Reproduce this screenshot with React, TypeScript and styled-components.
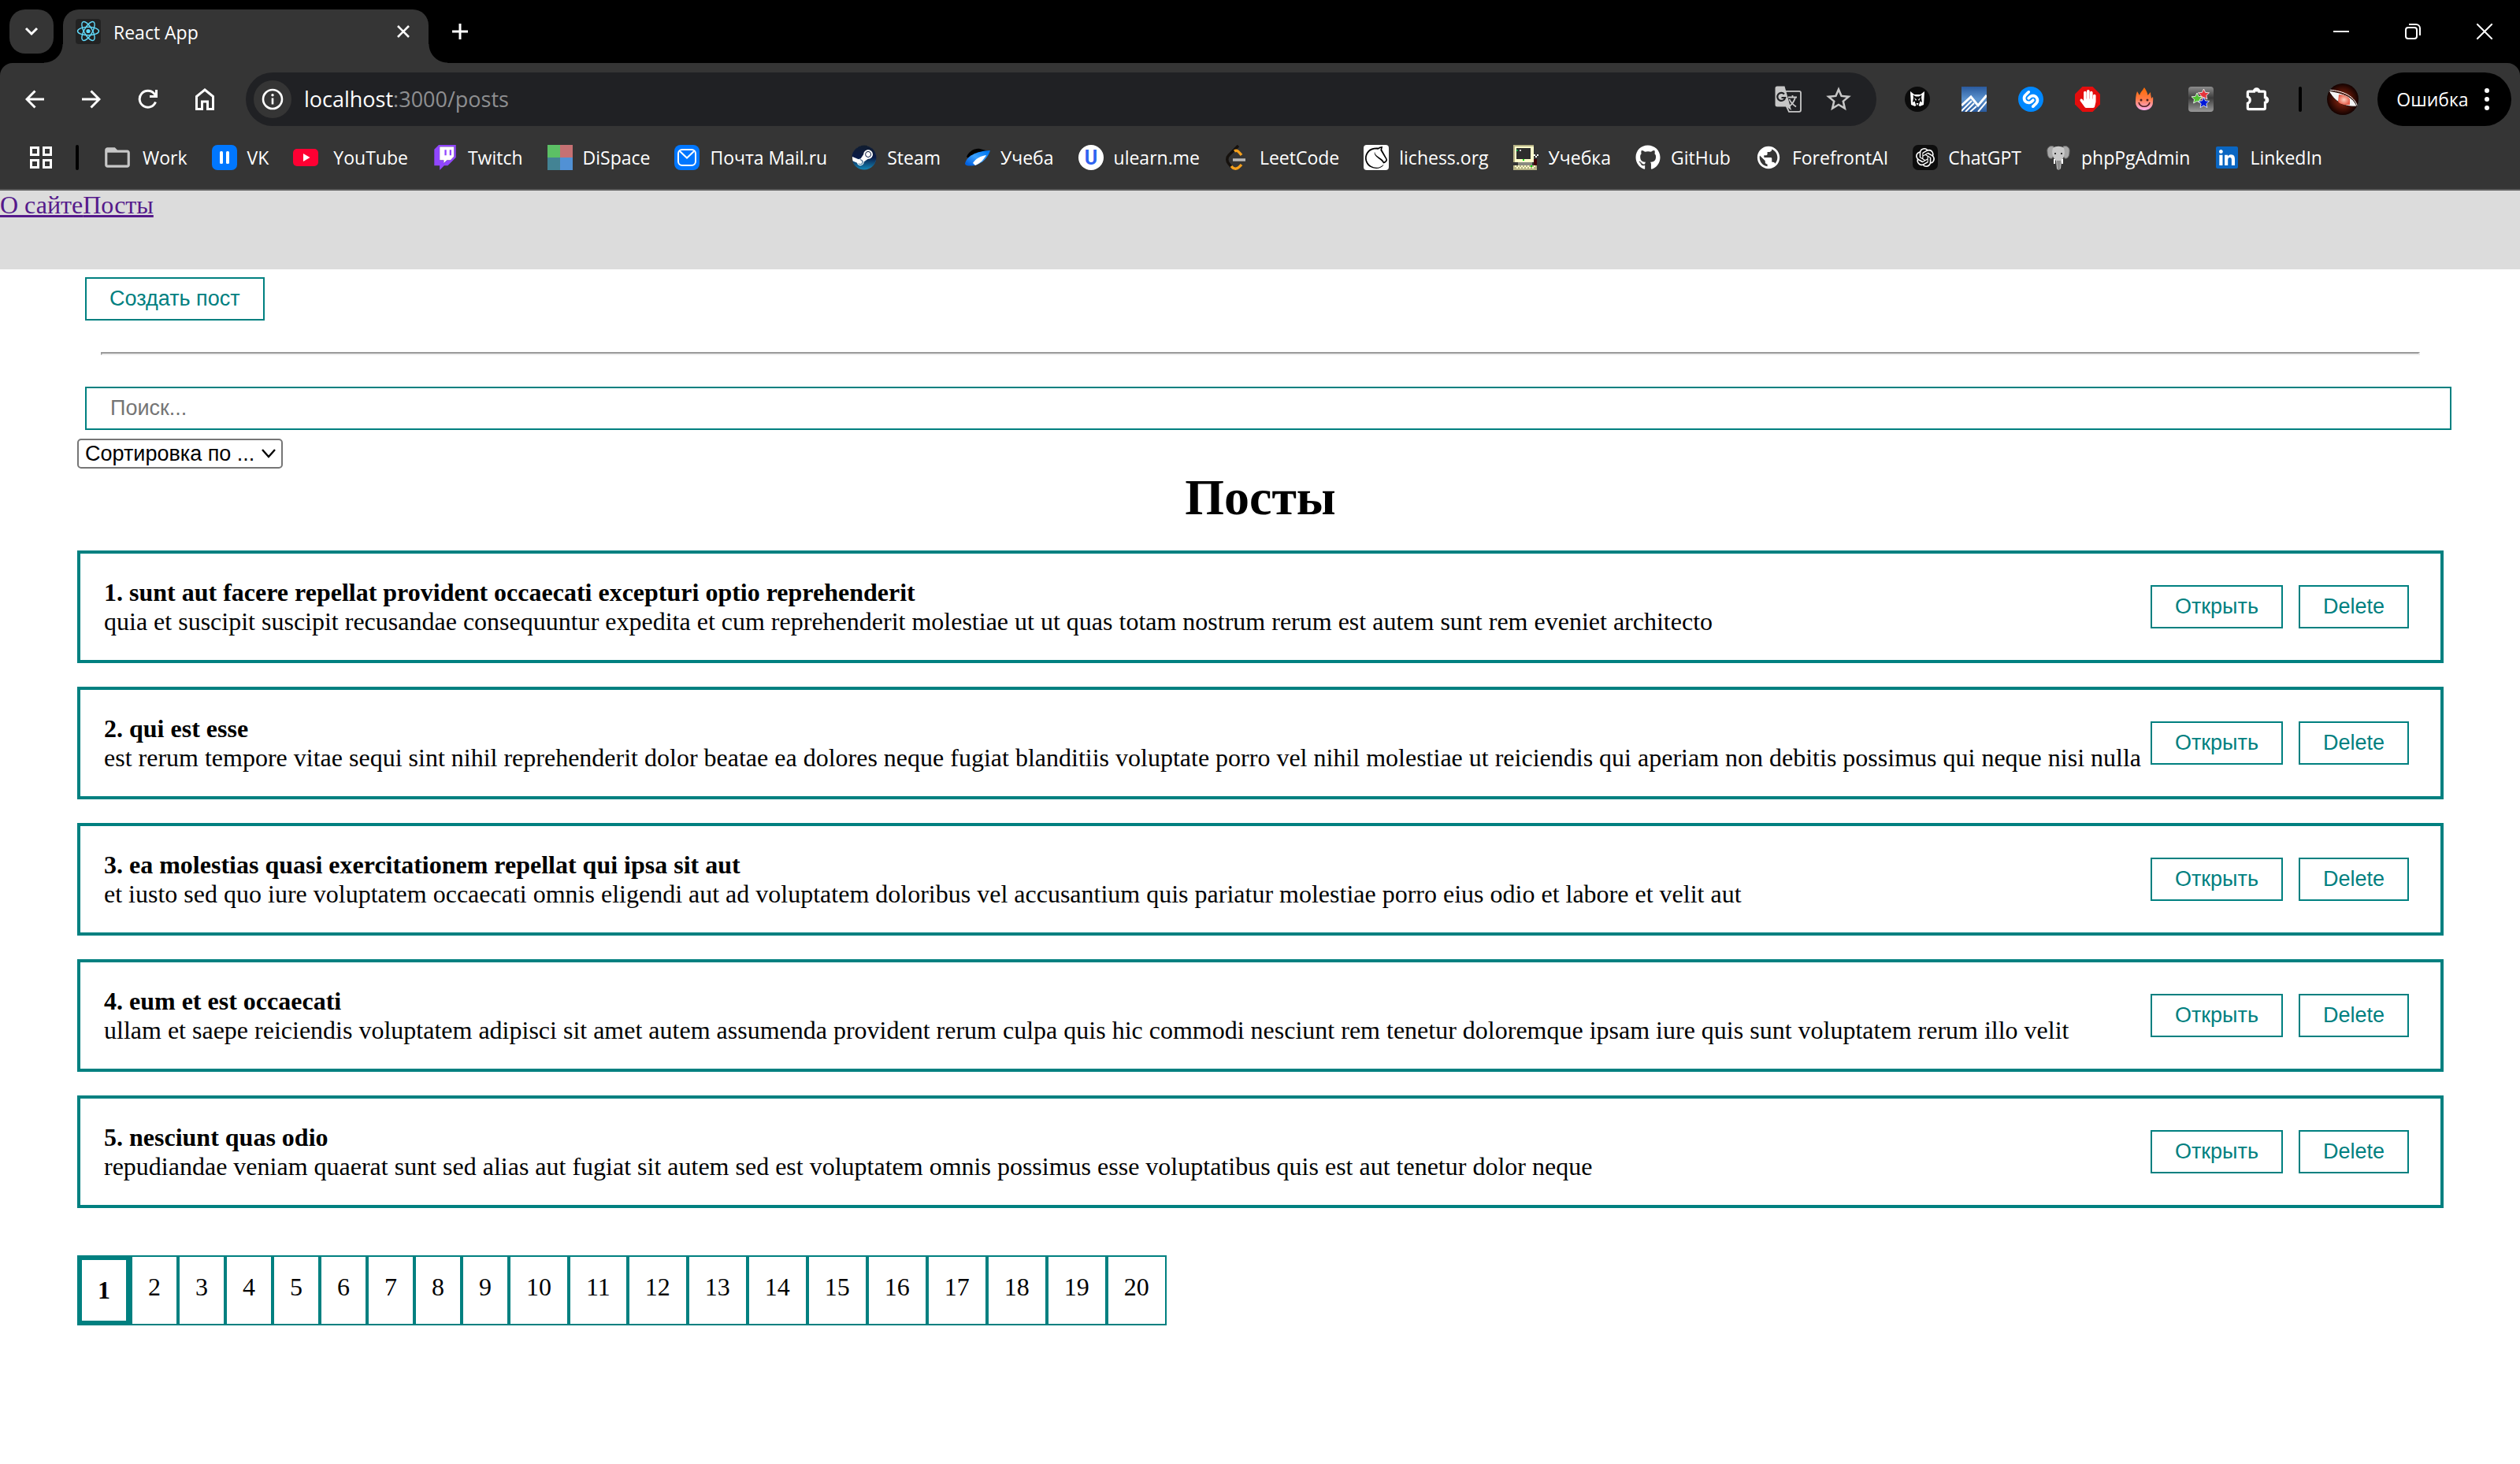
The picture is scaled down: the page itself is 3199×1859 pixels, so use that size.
import React from "react";
import styled, { createGlobalStyle, css } from "styled-components";
import { FaGithub, FaHandPaper, FaLinkedin, FaSteam } from "react-icons/fa";
import { MdFolderOpen, MdPublic, MdStarBorder } from "react-icons/md";
import { SiLichess, SiOpenai, SiShazam } from "react-icons/si";

const TEAL = "#008080";
const CHROME = "#353535";
const UI_FONT = '"Open Sans", "Noto Sans", sans-serif';
const PAGE_FONT = '"Liberation Serif", "Times New Roman", serif';
const CONTROL_FONT = '"Liberation Sans", Arial, sans-serif';

const GlobalStyle = createGlobalStyle`
  * { box-sizing: border-box; }
  html, body { margin: 0; padding: 0; background: #ffffff; }
  svg { display: block; }
`;

/* ---------- browser window ---------- */

const Browser = styled.div`
  display: flex;
  flex-direction: column;
  min-height: 100vh;
`;

const TabStrip = styled.div`
  display: flex;
  align-items: center;
  height: 80px;
  padding-left: 12px;
  background: #000000;
  font-family: ${UI_FONT};
`;

const PlainButton = styled.button`
  display: flex;
  align-items: center;
  justify-content: center;
  padding: 0;
  border: 0;
  background: transparent;
  color: #ffffff;
  flex: none;
`;

const TabSearch = styled(PlainButton)`
  width: 56px;
  height: 56px;
  border-radius: 20px;
  background: ${CHROME};
`;

const Tab = styled.div`
  position: relative;
  display: flex;
  align-items: center;
  align-self: flex-end;
  gap: 16px;
  width: 464px;
  height: 68px;
  margin-left: 12px;
  padding: 0 20px 12px 16px;
  border-radius: 20px 20px 0 0;
  background: ${CHROME};
  color: #ffffff;

  &::before,
  &::after {
    content: "";
    position: absolute;
    bottom: 0;
    width: 24px;
    height: 24px;
  }
  &::before {
    left: -24px;
    background: radial-gradient(circle at 0 0, transparent 23px, ${CHROME} 24px);
  }
  &::after {
    right: -24px;
    background: radial-gradient(circle at 100% 0, transparent 23px, ${CHROME} 24px);
  }
`;

const TabTitle = styled.span`
  flex: 1;
  padding-top: 2px;
  font-size: 23px;
  line-height: 32px;
  white-space: nowrap;
`;

const NewTab = styled(PlainButton)`
  width: 56px;
  height: 56px;
  margin-left: 12px;
`;

const WindowControls = styled.div`
  display: flex;
  margin-left: auto;
`;

const WindowButton = styled(PlainButton)`
  width: 91px;
  height: 80px;
`;

const ToolbarBack = styled.div`
  background: #000000;
`;

const Toolbar = styled.div`
  display: flex;
  align-items: center;
  height: 92px;
  padding: 0 11px 0 8px;
  border-radius: 16px 16px 0 0;
  background: ${CHROME};
  font-family: ${UI_FONT};
`;

const NavButton = styled(PlainButton)`
  width: 72px;
  height: 68px;
`;

const AddressBar = styled.div`
  display: flex;
  align-items: center;
  flex: 1;
  height: 68px;
  margin-left: 16px;
  padding: 0 16px 0 10px;
  border-radius: 34px;
  background: #202124;
`;

const SiteInfo = styled(PlainButton)`
  width: 48px;
  height: 48px;
  border-radius: 24px;
  background: ${CHROME};
`;

const Address = styled.div`
  flex: 1;
  margin-left: 16px;
  outline: none;
  font-size: 27px;
  line-height: 36px;
  color: #8e8f91;
  white-space: nowrap;
`;

const AddressHost = styled.span`
  color: #ffffff;
`;

const AddressAction = styled(PlainButton)`
  width: 64px;
  height: 48px;
  color: #c7c7c7;
`;

const Extensions = styled.div`
  display: flex;
  align-items: center;
  gap: 40px;
  margin-left: 36px;
`;

const Extension = styled(PlainButton)`
  width: 32px;
  height: 32px;
`;

const Divider = styled.div<{ $before: number; $after: number }>`
  flex: none;
  width: 4px;
  height: 32px;
  margin: 0 ${(p) => p.$after}px 0 ${(p) => p.$before}px;
  border-radius: 2px;
  background: #000000;
`;

const Avatar = styled(PlainButton)`
  width: 40px;
  height: 40px;
  border-radius: 20px;
  overflow: hidden;
`;

const ErrorChip = styled(PlainButton)`
  gap: 20px;
  height: 68px;
  width: 170px;
  margin-left: 24px;
  padding-right: 4px;
  border-radius: 34px;
  background: #000000;
  font-family: ${UI_FONT};
  font-size: 23px;
  line-height: 32px;
`;

const BookmarksBar = styled.nav`
  display: flex;
  align-items: center;
  height: 70px;
  padding: 0 0 12px 36px;
  border-bottom: 2px solid #5c5c5c;
  background: ${CHROME};
  font-family: ${UI_FONT};
`;

const BookmarkList = styled.div`
  display: flex;
  gap: 31px;
`;

const Bookmark = styled.a`
  display: flex;
  align-items: center;
  gap: 13px;
  color: #ffffff;
  font-size: 23px;
  line-height: 32px;
  text-decoration: none;
  white-space: pre;
`;

/* ---------- page ---------- */

const Navbar = styled.nav`
  display: flex;
  height: 100px;
  background: #dcdcdc;
  font-family: ${PAGE_FONT};
  font-size: 32px;
  line-height: 37px;
`;

const NavLink = styled.a`
  color: #551a8b;
  text-decoration: underline;
`;

const Content = styled.main`
  display: flex;
  flex-direction: column;
  align-items: stretch;
  padding: 0 97px 0 98px;
  background: #ffffff;
  color: #000000;
  font-family: ${PAGE_FONT};
  font-size: 32px;
  line-height: 37px;
`;

const field = css`
  border: 2px solid ${TEAL};
  background: #ffffff;
  font-family: ${CONTROL_FONT};
  font-size: 27px;
  line-height: 31px;
`;

const Button = styled.button`
  ${field}
  align-self: flex-start;
  flex: none;
  margin: 10px;
  padding: 10px 29px;
  color: ${TEAL};
`;

const Rule = styled.hr`
  height: 4px;
  margin: 30px;
  border: 2px solid;
  border-color: #9a9a9a #eeeeee #eeeeee #9a9a9a;
`;

const SearchInput = styled.input`
  ${field}
  width: 100%;
  height: 55px;
  margin: 10px;
  padding: 10px 30px;
  border-radius: 0;
  outline: none;

  &::placeholder {
    color: #757575;
    opacity: 1;
  }
`;

const SelectBox = styled.div`
  position: relative;
  align-self: flex-start;
  display: flex;
  margin-top: 1px;

  svg {
    position: absolute;
    right: 9px;
    top: 13px;
    pointer-events: none;
  }
`;

const Select = styled.select`
  appearance: none;
  height: 38px;
  margin: 0;
  padding: 0 33px 0 8px;
  border: 2px solid #767676;
  border-radius: 5px;
  background: #ffffff;
  color: #000000;
  font-family: ${CONTROL_FONT};
  font-size: 27px;
  line-height: 31px;
`;

const Title = styled.h1`
  margin: 0;
  font-size: 64px;
  font-weight: 700;
  line-height: 74px;
  text-align: center;
`;

const Posts = styled.section`
  display: flex;
  flex-direction: column;
  gap: 30px;
  margin-top: 30px;
`;

const Post = styled.article`
  display: flex;
  align-items: center;
  justify-content: space-between;
  padding: 30px;
  border: 4px solid ${TEAL};
`;

const PostText = styled.div`
  min-width: 0;
`;

const PostActions = styled.div`
  display: flex;
  flex: none;
`;

const Pages = styled.nav`
  display: flex;
  margin: 60px 0;
`;

const Page = styled.a<{ $current: boolean }>`
  padding: 20px;
  border: ${(p) => (p.$current ? 6 : 2)}px solid ${TEAL};
  color: #000000;
  font-weight: ${(p) => (p.$current ? 700 : 400)};
  text-decoration: none;
`;

/* ---------- icons ---------- */

const Stroke = ({ w = 24, h = 24, d, sw = 3 }: { w?: number; h?: number; d: string; sw?: number }) => (
  <svg width={w} height={h} viewBox={`0 0 ${w} ${h}`} fill="none" stroke="currentColor" strokeWidth={sw}>
    <path d={d} />
  </svg>
);

const ReactLogo = () => (
  <svg width="32" height="32" viewBox="0 0 32 32">
    <rect width="32" height="32" rx="4" fill="#222222" />
    <g fill="none" stroke="#61dafb" strokeWidth="1.4">
      <ellipse cx="16" cy="15.5" rx="13.5" ry="5.2" />
      <ellipse cx="16" cy="15.5" rx="13.5" ry="5.2" transform="rotate(60 16 15.5)" />
      <ellipse cx="16" cy="15.5" rx="13.5" ry="5.2" transform="rotate(120 16 15.5)" />
    </g>
    <circle cx="16" cy="15.5" r="2.6" fill="#61dafb" />
  </svg>
);

const HomeIcon = () => (
  <svg width="24" height="28" viewBox="0 0 24 28" fill="none" stroke="currentColor" strokeWidth="3">
    <path d="M1.5 26.5V10.5L12 2L22.5 10.5V26.5H15.5V17H8.5V26.5Z" />
  </svg>
);

const ReloadIcon = () => (
  <svg width="26" height="26" viewBox="0 0 26 26" fill="none" stroke="currentColor" strokeWidth="3">
    <path d="M22.5 16.5A10.500 10.500 0 1 1 20.8 6L23 8.3" />
    <path d="M23.5 1V9.5H15" />
  </svg>
);

const InfoIcon = () => (
  <svg width="28" height="28" viewBox="0 0 28 28">
    <circle cx="14" cy="14" r="12" fill="none" stroke="#ffffff" strokeWidth="2.6" />
    <path d="M14 12.5V20.5" stroke="#ffffff" strokeWidth="2.6" />
    <circle cx="14" cy="8.7" r="1.7" fill="#ffffff" />
  </svg>
);

const TranslateIcon = () => (
  <svg width="34" height="34" viewBox="0 0 34 34">
    <path d="M13 6.800H31A2 2 0 0 1 33 8.800V30.800A2 2 0 0 1 31 32.800H18L13 22" fill="none" stroke="currentColor" strokeWidth="1.800" />
    <path d="M3 0.500H12.500L21 31L15 26.500H3A2.500 2.500 0 0 1 0.500 24V3A2.500 2.500 0 0 1 3 0.500Z" fill="currentColor" />
    <path d="M12 10.500A5 5 0 1 0 13.200 15H8.500" fill="none" stroke="#202124" strokeWidth="2.200" />
    <path d="M17 14.500H28M22.500 12V14.500M26 14.500C25 19 21 24 18.500 26M18.500 17C20 21 24 24.500 27 26.500" fill="none" stroke="currentColor" strokeWidth="1.800" />
  </svg>
);

const PuzzleIcon = () => (
  <svg width="34" height="34" viewBox="0 0 34 34">
    <path
      d="M5 6.500H12A3.500 3.500 0 0 1 19 6.500H25.500A1.500 1.500 0 0 1 27 8V14.500A3.500 3.500 0 0 1 27 21.500V29A1.500 1.500 0 0 1 25.500 30.500H5A1.500 1.500 0 0 1 3.500 29V22.500A4.800 4.800 0 0 0 3.500 13.500V8A1.500 1.500 0 0 1 5 6.500Z"
      fill="none"
      stroke="#ffffff"
      strokeWidth="3.400"
    />
    <path d="M11 7A4.500 4.500 0 0 1 20 7ZM27 13.500A4.500 4.500 0 0 1 27 22.500Z" fill="#ffffff" />
  </svg>
);

const RestoreIcon = () => (
  <svg width="20" height="20" viewBox="0 0 20 20" fill="none" stroke="currentColor" strokeWidth="2">
    <rect x="1" y="5" width="14" height="14" rx="3" />
    <path d="M5 1H14A5 5 0 0 1 19 6V15" />
  </svg>
);

const AppsIcon = () => (
  <svg width="32" height="32" viewBox="0 0 32 32" fill="none" stroke="#ffffff" strokeWidth="3">
    <rect x="3.5" y="3.5" width="9" height="9" />
    <rect x="19.5" y="3.5" width="9" height="9" />
    <rect x="3.5" y="19.5" width="9" height="9" />
    <rect x="19.5" y="19.5" width="9" height="9" />
  </svg>
);

const DotsIcon = () => (
  <svg width="6" height="28" viewBox="0 0 6 28" fill="#ffffff">
    <circle cx="3" cy="3" r="3" />
    <circle cx="3" cy="14" r="3" />
    <circle cx="3" cy="25" r="3" />
  </svg>
);

const WolfIcon = () => (
  <svg width="32" height="32" viewBox="0 0 32 32">
    <circle cx="16" cy="16" r="16" fill="#0b0b0b" />
    <path d="M7 6L12 10H20L25 6L24 23L19 25L16 22L13 25L8 23Z" fill="#ffffff" />
    <path d="M10.5 10.5L14 12.5H18L21.5 10.5L21 14L22 20L19.5 18.5L18 23L16 25L14 23L12.5 18.5L10 20L11 14Z" fill="#0b0b0b" />
    <path d="M12 14L15 16.5L14 18ZM20 14L17 16.5L18 18ZM14.5 21H17.5L16 24Z" fill="#ffffff" />
  </svg>
);

const ChartIcon = () => (
  <svg width="32" height="32" viewBox="0 0 32 32">
    <defs>
      <linearGradient id="chart" x2="0" y2="1">
        <stop stopColor="#2a5a9d" />
        <stop offset="0.5" stopColor="#5c93cf" />
        <stop offset="1" stopColor="#2a5a9d" />
      </linearGradient>
    </defs>
    <rect width="32" height="32" fill="url(#chart)" />
    <g fill="none" stroke="#ffffff">
      <path d="M0 24L12 13L21 24L32 11" strokeWidth="3" />
      <path d="M0 31L13 18M5 32L16 21M11 32L19 25M21 32L32 19" strokeWidth="2" />
    </g>
  </svg>
);

const ShazamIcon = () => (
  <svg width="32" height="32" viewBox="0 0 32 32">
    <circle cx="16" cy="16" r="15" fill="#ffffff" />
    <SiShazam size={32} color="#0088ff" />
  </svg>
);

const AdblockIcon = () => (
  <svg width="32" height="32" viewBox="0 0 32 32">
    <path d="M9.5 0H22.5L32 9.500V22.5L22.5 32H9.500L0 22.5V9.500Z" fill="#e40d0d" />
    <FaHandPaper x={5} y={4} size={23} color="#ffffff" />
  </svg>
);

const FlameIcon = () => (
  <svg width="32" height="32" viewBox="0 0 32 32">
    <defs>
      <linearGradient id="flame" x2="0" y2="1">
        <stop stopColor="#ff6a00" />
        <stop offset="0.5" stopColor="#ff7a45" />
        <stop offset="1" stopColor="#ffb0f0" />
      </linearGradient>
    </defs>
    <path d="M16 1C18 4 20 7 20.5 11L24 7C24 11 25 13 25 15L27 13C27.5 16 27 18 27 20C27 26 22 30 16 30S5 26 5 20C5 16 5 11 7 6L10 11C11 7 14 5 16 1Z" fill="url(#flame)" />
    <g fill="#4a2020">
      <circle cx="12" cy="17" r="1.5" />
      <circle cx="20" cy="17" r="1.5" />
    </g>
    <path d="M9 20C11 27 21 27 23 20" fill="none" stroke="#4a2020" strokeWidth="1.6" />
  </svg>
);

const STAR = "M0 -7L2.1 -2.6L7 -2.2L3.4 1.200L4.400 6L0 3.500L-4.400 6L-3.400 1.200L-7 -2.200L-2.100 -2.600Z";

const StarsIcon = () => (
  <svg width="32" height="32" viewBox="0 0 32 32">
    <defs>
      <linearGradient id="stars" x2="0" y2="1">
        <stop stopColor="#8d8d8d" />
        <stop offset="0.45" stopColor="#3c3c3c" />
        <stop offset="1" stopColor="#9a9a9a" />
      </linearGradient>
    </defs>
    <rect width="32" height="32" rx="4" fill="url(#stars)" />
    <g stroke="#ffffff" strokeWidth="0.8">
      <path d={STAR} transform="translate(19.5 10)" fill="#e5343c" />
      <path d={STAR} transform="translate(11 15)" fill="#52c234" />
      <path d={STAR} transform="translate(19.5 20.5)" fill="#0018d8" />
    </g>
  </svg>
);

const EyeIcon = () => (
  <svg width="40" height="40" viewBox="0 0 40 40">
    <defs>
      <radialGradient id="eye">
        <stop stopColor="#a02a10" />
        <stop offset="1" stopColor="#140200" />
      </radialGradient>
      <radialGradient id="iris">
        <stop stopColor="#ffd0c0" />
        <stop offset="1" stopColor="#e8604c" />
      </radialGradient>
    </defs>
    <rect width="40" height="40" fill="url(#eye)" />
    <path d="M2 9C16 12 32 14 38 29C28 30 12 28 2 9Z" fill="#f4f4f4" stroke="#1a0500" />
    <path d="M15 14C22 14 28 17 29 20V27C22 28 16 26 14 23Z" fill="url(#iris)" />
    <path d="M1 8C16 9 34 13 39 30" fill="none" stroke="#ffffff" />
  </svg>
);

const VkIcon = () => (
  <svg width="32" height="32" viewBox="0 0 32 32">
    <rect width="32" height="32" rx="7" fill="#0077ff" />
    <rect x="10" y="8" width="4" height="16" rx="1.5" fill="#ffffff" />
    <rect x="18" y="8" width="4" height="16" rx="1.5" fill="#ffffff" />
  </svg>
);

const YouTubeIcon = () => (
  <svg width="32" height="32" viewBox="0 0 32 32">
    <rect y="5" width="32" height="22" rx="5" fill="#ff0033" />
    <path d="M13 11L21.5 16L13 21Z" fill="#ffffff" />
  </svg>
);

const TwitchIcon = () => (
  <svg width="32" height="32" viewBox="-200 0 2800 2800">
    <path d="M2200 1300L1800 1700H1400L1050 2050V1700H600V200H2200Z" fill="#ffffff" />
    <path
      fill="#9146ff"
      d="M500 0L0 500V2300H600V2800L1100 2300H1500L2400 1400V0ZM2200 1300L1800 1700H1400L1050 2050V1700H600V200H2200ZM1700 550H1900V1150H1700ZM1150 550H1350V1150H1150Z"
    />
  </svg>
);

const DispaceIcon = () => (
  <svg width="32" height="32" viewBox="0 0 32 32">
    <rect width="16" height="16" fill="#5cc065" />
    <rect x="16" width="16" height="16" fill="#c67173" />
    <rect y="16" width="16" height="16" fill="#438394" />
    <rect x="16" y="16" width="16" height="16" fill="#5191d5" />
  </svg>
);

const MailIcon = () => (
  <svg width="32" height="32" viewBox="0 0 32 32">
    <rect width="32" height="32" rx="8" fill="#0077ff" />
    <g fill="none" stroke="#ffffff" strokeWidth="2">
      <rect x="5" y="6" width="22" height="20" rx="5" />
      <path d="M7 8L16 16.5L25 8" />
    </g>
  </svg>
);

const SteamIcon = () => (
  <svg width="32" height="32" viewBox="0 0 32 32">
    <defs>
      <linearGradient id="steam" x2="0" y2="1">
        <stop stopColor="#111d2e" />
        <stop offset="0.5" stopColor="#0a1b48" />
        <stop offset="1" stopColor="#1387b8" />
      </linearGradient>
    </defs>
    <circle cx="16" cy="16" r="15" fill="#ffffff" />
    <FaSteam size={32} fill="url(#steam)" />
  </svg>
);

const StudyIcon = () => (
  <svg width="32" height="32" viewBox="0 0 32 32">
    <defs>
      <linearGradient id="study" x1="0.1" y1="0.9" x2="0.9" y2="0.1">
        <stop stopColor="#0060e0" />
        <stop offset="0.5" stopColor="#3aa0ff" />
        <stop offset="1" stopColor="#0078f0" />
      </linearGradient>
    </defs>
    <path d="M2 15C5 8 12 4 19 5L30 8L8 20Z" fill="#000000" />
    <path d="M0 24C2 14 14 8 32 7C30 15 22 24 12 26C6 27 1 27 0 24Z" fill="url(#study)" />
    <path d="M10 23C14 17 20 14 27 13C24 18 19 24 13 26Z" fill="#ffffff" />
  </svg>
);

const UlearnIcon = () => (
  <svg width="32" height="32" viewBox="0 0 32 32">
    <circle cx="16" cy="16" r="16" fill="#ffffff" />
    <text x="16" y="25" textAnchor="middle" fontFamily="Roboto, sans-serif" fontSize="25" fontWeight="700" fill="#2f63f0">
      U
    </text>
  </svg>
);

const LeetCodeIcon = () => (
  <svg width="32" height="32" viewBox="0 0 32 32" fill="none" strokeWidth="3.5">
    <path d="M18 1L6 13C3 16 3 21 6 24L10 29" stroke="#15110d" />
    <path d="M13 8C16 6 18 8 22 13M9 27C13 32 17 31 22 25" stroke="#f5a01c" />
    <path d="M11 19H27" stroke="#b9b9b9" />
  </svg>
);

const LichessIcon = () => (
  <svg width="32" height="32" viewBox="0 0 32 32">
    <rect width="32" height="32" rx="4" fill="#ffffff" />
    <SiLichess x={2} y={2} size={28} color="#000000" />
  </svg>
);

const ComputerIcon = () => (
  <svg width="32" height="32" viewBox="0 0 32 32" shapeRendering="crispEdges">
    <rect x="0" y="0" width="26" height="22" fill="#b5b184" />
    <rect x="2" y="2" width="24" height="20" fill="#ffffcc" />
    <rect x="4" y="4" width="18" height="14" fill="#2d2d2d" />
    <rect x="4" y="6" width="2" height="2" fill="#00a040" />
    <rect x="8" y="6" width="2" height="2" fill="#d0d0d0" />
    <rect x="12" y="18" width="2" height="2" fill="#00e000" />
    <rect x="6" y="22" width="18" height="4" fill="#8a8a80" />
    <rect x="26" y="18" width="4" height="8" fill="#400008" />
    <rect x="26" y="12" width="2" height="2" fill="#ffffff" />
    <rect x="30" y="12" width="2" height="2" fill="#ffffff" />
    <rect x="28" y="14" width="2" height="2" fill="#ffffff" />
    <rect x="0" y="26" width="30" height="6" fill="#b5b184" />
    <path d="M2 27H28M4 29H28" stroke="#ffffcc" strokeWidth="2" strokeDasharray="2 2" />
    <rect x="22" y="26" width="2" height="2" fill="#00e000" />
  </svg>
);

const ChatGptIcon = () => (
  <svg width="32" height="32" viewBox="0 0 32 32">
    <rect width="32" height="32" rx="7" fill="#0d0d0d" />
    <SiOpenai x={4} y={4} size={24} color="#ffffff" />
  </svg>
);

const ElephantIcon = () => (
  <svg width="32" height="32" viewBox="0 0 32 32">
    <path d="M10 2C5 0 1 4 2 9C2 14 4 18 8 17L11 12ZM22 2C27 0 31 4 30 9C30 14 28 18 24 17L21 12Z" fill="#a8a8a8" stroke="#6d6d6d" />
    <path d="M9 4C13 1 19 1 23 4C25 10 23 17 20 20L19 30C17 32 15 32 14 30L13 20C9 17 7 10 9 4Z" fill="#c9c9c9" />
    <path d="M14 20L15 31H18L19 20Z" fill="#8c8c8c" />
    <path d="M11 18V24M21 18V24" stroke="#ffffff" strokeWidth="2" />
    <rect x="11" y="10" width="2" height="2" fill="#333333" />
    <rect x="19" y="10" width="2" height="2" fill="#333333" />
  </svg>
);

const LinkedInIcon = () => (
  <svg width="32" height="32" viewBox="0 0 32 32">
    <rect x="4" y="4" width="24" height="24" fill="#ffffff" />
    <FaLinkedin size={32} color="#0a66c2" />
  </svg>
);

/* ---------- data ---------- */

const bookmarks: [string, React.ReactNode][] = [
  ["Work", <MdFolderOpen size={38} color="#c7c7c7" />],
  ["VK", <VkIcon />],
  [" YouTube", <YouTubeIcon />],
  ["Twitch", <TwitchIcon />],
  ["DiSpace", <DispaceIcon />],
  ["Почта Mail.ru", <MailIcon />],
  ["Steam", <SteamIcon />],
  ["Учеба", <StudyIcon />],
  ["ulearn.me", <UlearnIcon />],
  ["LeetCode", <LeetCodeIcon />],
  ["lichess.org", <LichessIcon />],
  ["Учебка", <ComputerIcon />],
  ["GitHub", <FaGithub size={32} />],
  ["ForefrontAI", <MdPublic size={34} />],
  ["ChatGPT", <ChatGptIcon />],
  ["phpPgAdmin", <ElephantIcon />],
  ["LinkedIn", <LinkedInIcon />],
];

const extensions: [string, React.ReactNode][] = [
  ["Wolf", <WolfIcon />],
  ["Chart", <ChartIcon />],
  ["Shazam", <ShazamIcon />],
  ["AdBlock", <AdblockIcon />],
  ["Flame", <FlameIcon />],
  ["Stars", <StarsIcon />],
  ["Extensions", <PuzzleIcon />],
];

const posts = [
  {
    id: 1,
    title: "sunt aut facere repellat provident occaecati excepturi optio reprehenderit",
    body: "quia et suscipit suscipit recusandae consequuntur expedita et cum reprehenderit molestiae ut ut quas totam nostrum rerum est autem sunt rem eveniet architecto",
  },
  {
    id: 2,
    title: "qui est esse",
    body: "est rerum tempore vitae sequi sint nihil reprehenderit dolor beatae ea dolores neque fugiat blanditiis voluptate porro vel nihil molestiae ut reiciendis qui aperiam non debitis possimus qui neque nisi nulla",
  },
  {
    id: 3,
    title: "ea molestias quasi exercitationem repellat qui ipsa sit aut",
    body: "et iusto sed quo iure voluptatem occaecati omnis eligendi aut ad voluptatem doloribus vel accusantium quis pariatur molestiae porro eius odio et labore et velit aut",
  },
  {
    id: 4,
    title: "eum et est occaecati",
    body: "ullam et saepe reiciendis voluptatem adipisci sit amet autem assumenda provident rerum culpa quis hic commodi nesciunt rem tenetur doloremque ipsam iure quis sunt voluptatem rerum illo velit",
  },
  {
    id: 5,
    title: "nesciunt quas odio",
    body: "repudiandae veniam quaerat sunt sed alias aut fugiat sit autem sed est voluptatem omnis possimus esse voluptatibus quis est aut tenetur dolor neque",
  },
];

const pages = Array.from({ length: 20 }, (_, i) => i + 1);

export default function App() {
  return (
    <Browser>
      <GlobalStyle />
      <TabStrip>
        <TabSearch aria-label="Search tabs">
          <Stroke w={18} h={12} d="M2 2L9 9L16 2" />
        </TabSearch>
        <Tab>
          <ReactLogo />
          <TabTitle>React App</TabTitle>
          <PlainButton aria-label="Close tab">
            <Stroke w={24} h={24} d="M5 5L19 19M19 5L5 19" sw={2.6} />
          </PlainButton>
        </Tab>
        <NewTab aria-label="New tab">
          <Stroke w={20} h={20} d="M10 0V20M0 10H20" />
        </NewTab>
        <WindowControls>
          <WindowButton aria-label="Minimize">
            <Stroke w={20} h={2} d="M0 1H20" sw={2} />
          </WindowButton>
          <WindowButton aria-label="Restore">
            <RestoreIcon />
          </WindowButton>
          <WindowButton aria-label="Close">
            <Stroke w={20} h={20} d="M0 0L20 20M20 0L0 20" sw={2} />
          </WindowButton>
        </WindowControls>
      </TabStrip>

      <ToolbarBack>
        <Toolbar>
          <NavButton aria-label="Back">
            <Stroke w={24} h={24} d="M24 12H2M12.5 1.5L2 12L12.5 22.5" />
          </NavButton>
          <NavButton aria-label="Forward">
            <Stroke w={24} h={24} d="M0 12H22M11.5 1.5L22 12L11.5 22.5" />
          </NavButton>
          <NavButton aria-label="Reload">
            <ReloadIcon />
          </NavButton>
          <NavButton aria-label="Home">
            <HomeIcon />
          </NavButton>
          <AddressBar>
            <SiteInfo aria-label="Site information">
              <InfoIcon />
            </SiteInfo>
            <Address role="textbox" aria-label="Address" contentEditable suppressContentEditableWarning spellCheck={false}>
              <AddressHost>localhost</AddressHost>:3000/posts
            </Address>
            <AddressAction aria-label="Translate">
              <TranslateIcon />
            </AddressAction>
            <AddressAction aria-label="Bookmark">
              <MdStarBorder size={38} />
            </AddressAction>
          </AddressBar>
          <Extensions>
            {extensions.map(([name, icon]) => (
              <Extension key={name} aria-label={name}>
                {icon}
              </Extension>
            ))}
          </Extensions>
          <Divider $before={36} $after={32} />
          <Avatar aria-label="Profile">
            <EyeIcon />
          </Avatar>
          <ErrorChip>
            Ошибка
            <DotsIcon />
          </ErrorChip>
        </Toolbar>
      </ToolbarBack>

      <BookmarksBar>
        <PlainButton aria-label="Apps">
          <AppsIcon />
        </PlainButton>
        <Divider $before={28} $after={30} />
        <BookmarkList>
          {bookmarks.map(([label, icon]) => (
            <Bookmark key={label} href="#">
              {icon}
              {label}
            </Bookmark>
          ))}
        </BookmarkList>
      </BookmarksBar>

      <Navbar>
        <NavLink href="#about">О сайте</NavLink>
        <NavLink href="#posts">Посты</NavLink>
      </Navbar>

      <Content>
        <Button>Создать пост</Button>
        <Rule />
        <SearchInput aria-label="Поиск" placeholder="Поиск..." />
        <SelectBox>
          <Select aria-label="Сортировка" defaultValue="">
            <option value="">Сортировка по ...</option>
            <option value="title">По названию</option>
            <option value="body">По описанию</option>
          </Select>
          <Stroke w={18} h={12} d="M1 1L9 10L17 1" sw={2.4} />
        </SelectBox>
        <Title>Посты</Title>
        <Posts>
          {posts.map((post) => (
            <Post key={post.id}>
              <PostText>
                <strong>
                  {post.id}. {post.title}
                </strong>
                <div>{post.body}</div>
              </PostText>
              <PostActions>
                <Button>Открыть</Button>
                <Button>Delete</Button>
              </PostActions>
            </Post>
          ))}
        </Posts>
        <Pages aria-label="Страницы">
          {pages.map((n) => (
            <Page key={n} href={`#page-${n}`} $current={n === 1} aria-current={n === 1 ? "page" : undefined}>
              {n}
            </Page>
          ))}
        </Pages>
      </Content>
    </Browser>
  );
}
